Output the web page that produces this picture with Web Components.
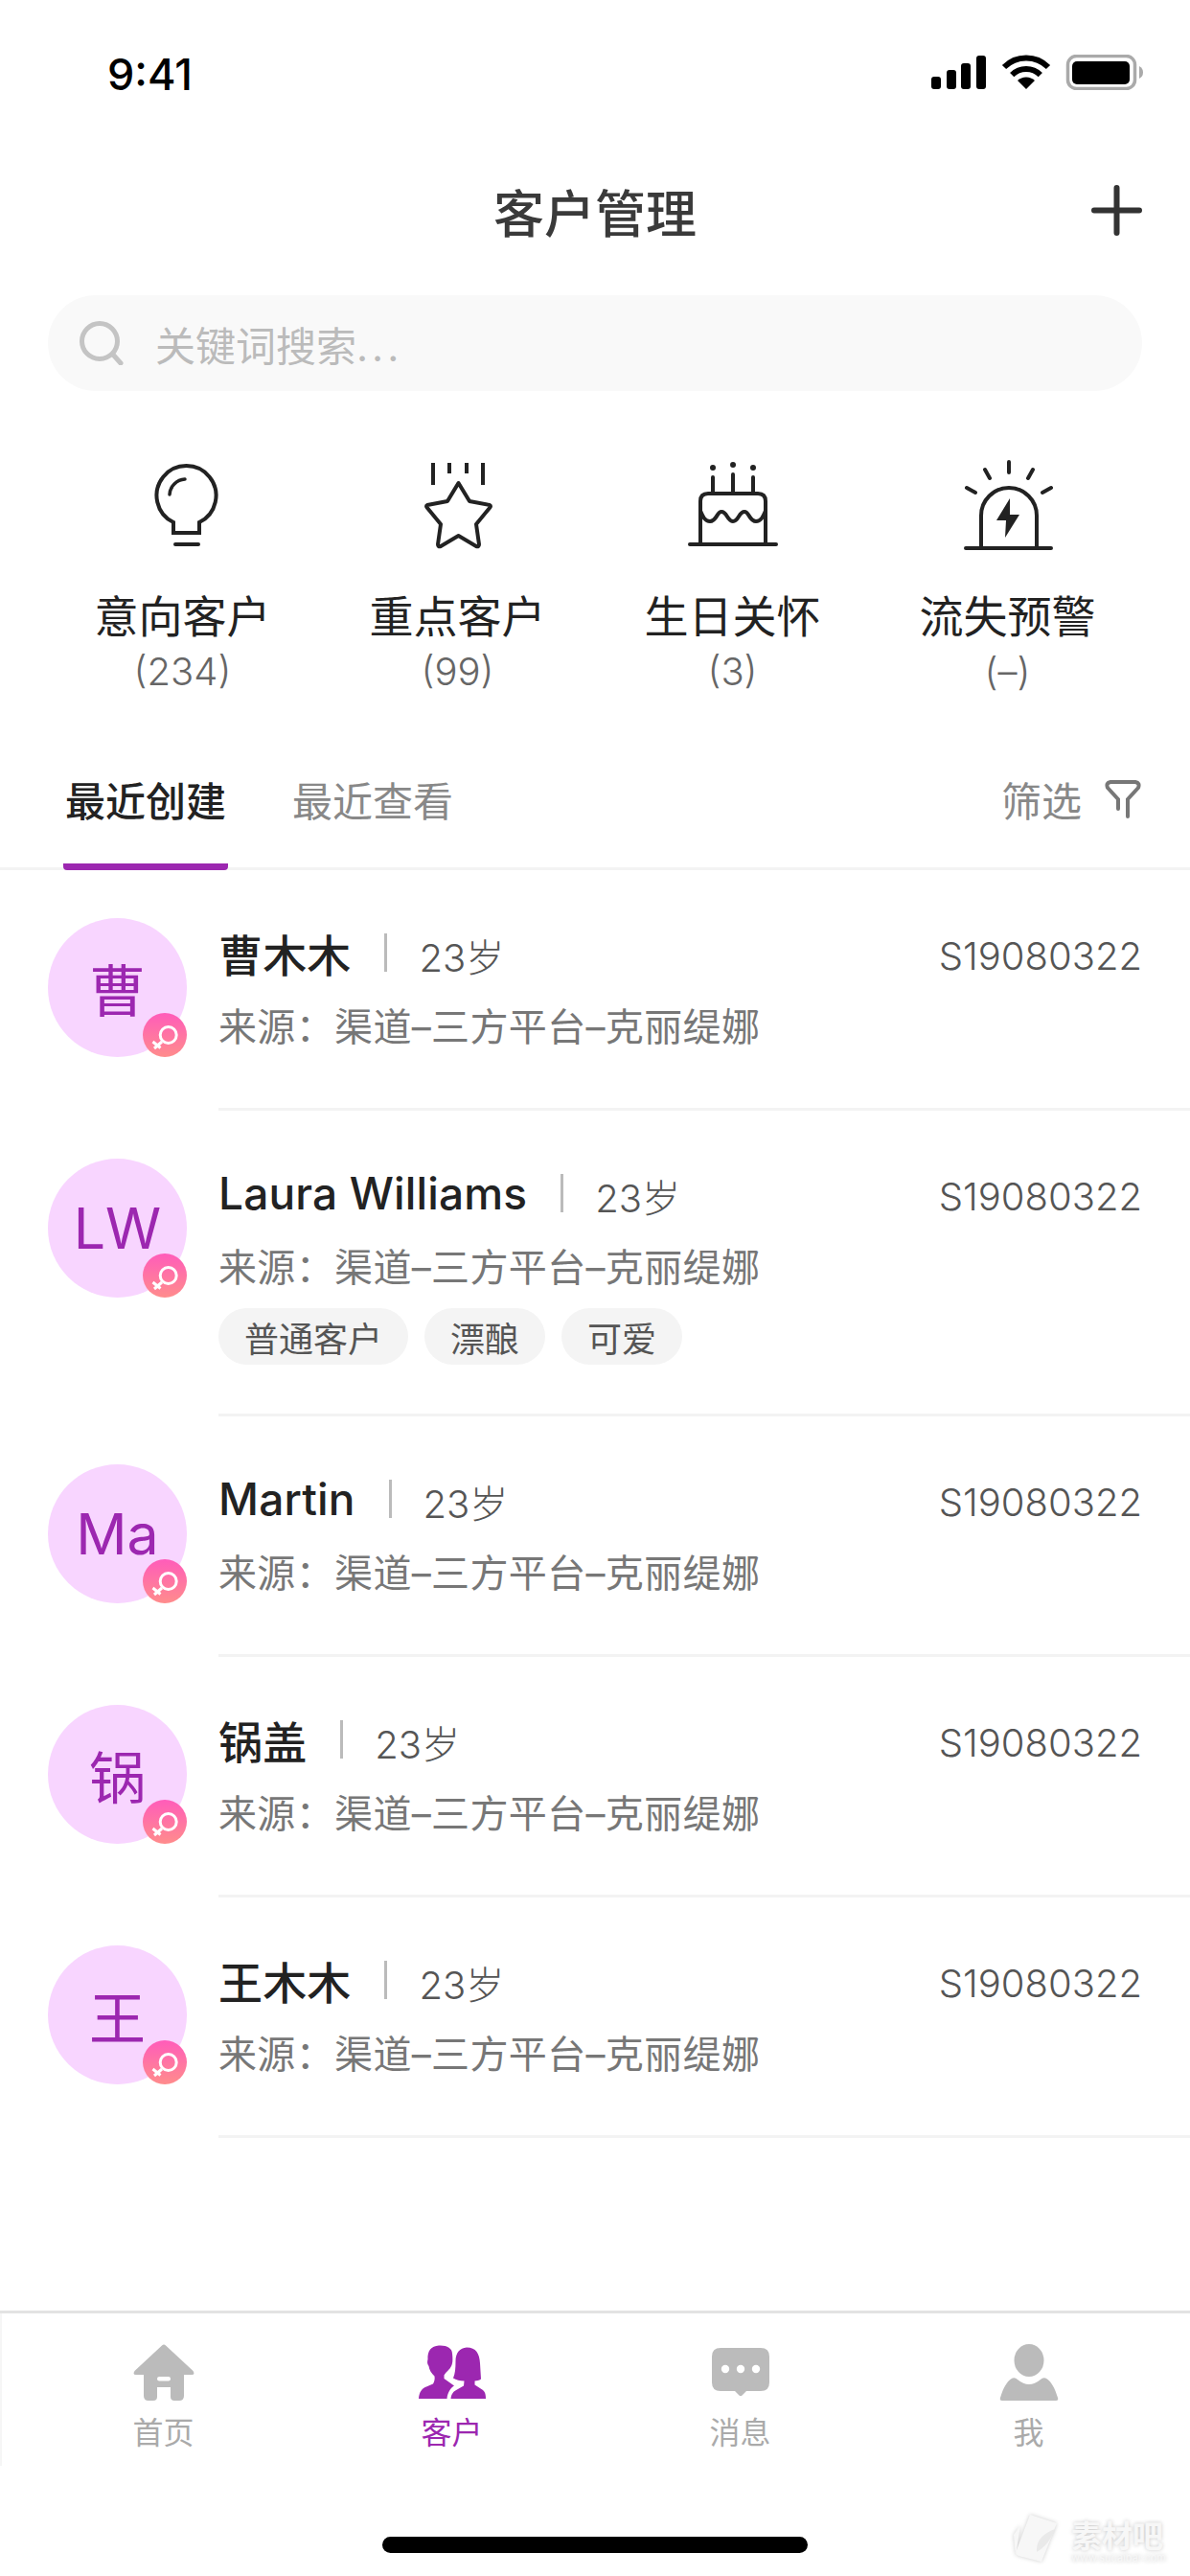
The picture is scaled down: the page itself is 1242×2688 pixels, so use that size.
<!DOCTYPE html>
<html lang="zh">
<head>
<meta charset="utf-8">
<title>客户管理</title>
<style>
html, body { margin: 0; padding: 0; background: #fff; }
body {
  width: 1242px;
  height: 2688px;
  display: flex;
  flex-direction: column;
  overflow: hidden;
  font-family: Inter, "Noto Sans CJK SC", sans-serif;
  color: #222;
}
.spacer { flex: 1; }
.dots { letter-spacing: 4px; }
</style>
</head>
<body>
  <cus-status-bar></cus-status-bar>
  <cus-nav>客户管理</cus-nav>
  <cus-search>关键词搜索<span class="dots">...</span></cus-search>

  <cus-quick>
    <cus-quick-item label="意向客户" count="(234)">
      <svg viewBox="0 0 96 96" fill="none" stroke="#222" stroke-width="4" stroke-linecap="round">
        <path d="M38 67V78H65V67A31 31 0 1 0 38 67Z" stroke-linecap="butt"/>
        <path d="M34 38A17 17 0 0 1 50 22" stroke-width="3.5"/>
        <path d="M40 90H64"/>
      </svg>
    </cus-quick-item>
    <cus-quick-item label="重点客户" count="(99)">
      <svg viewBox="0 0 96 96" fill="none" stroke="#222" stroke-width="4" stroke-linejoin="round">
        <path d="M48.500 26L60 45L81 49Q83 50 81 52L67 69L70 90Q70 93 67 92L48.500 81L30 92Q27 93 27 90L30 69L16 52Q14 50 16 49L37 45Z"/>
        <path d="M22 5V28M39 5V16M57 5V16M74 5V28"/>
      </svg>
    </cus-quick-item>
    <cus-quick-item label="生日关怀" count="(3)">
      <svg viewBox="0 0 96 96" fill="none" stroke="#222" stroke-width="4" stroke-linecap="round">
        <circle cx="27" cy="10" r="3" fill="#222" stroke="none"/>
        <circle cx="48" cy="7" r="3" fill="#222" stroke="none"/>
        <circle cx="69" cy="10" r="3" fill="#222" stroke="none"/>
        <path d="M27 20V36M48 17V36M69 20V36"/>
        <path d="M14 90V45Q14 37 22 37H74Q82 37 82 45V90"/>
        <path d="M3 90H93"/>
        <path d="M14 55C17 62 19 66 24 66C31 66 31 56 36 56C42 56 42 66 48 66C54 66 54 56 60 56C65 56 65 66 72 66C77 66 79 62 82 55"/>
      </svg>
    </cus-quick-item>
    <cus-quick-item label="流失预警" count="(–)">
      <svg viewBox="0 0 96 96" fill="none" stroke="#222" stroke-width="4" stroke-linecap="round">
        <path d="M4 94H93"/>
        <path d="M20 94V60A29 29 0 0 1 78 60V94"/>
        <path d="M49 4V15M24 12L29 21M74 12L69 21M5 31L14 36M93 31L84 36"/>
        <polygon points="50,42 36,65 46,65 45,83 60,59 50,59" fill="#222" stroke="none"/>
      </svg>
    </cus-quick-item>
  </cus-quick>

  <cus-tabs></cus-tabs>

  <cus-row initial="曹" name="曹木木"></cus-row>
  <cus-row initial="LW" name="Laura Williams">
    <cus-tag>普通客户</cus-tag><cus-tag>漂酿</cus-tag><cus-tag>可爱</cus-tag>
  </cus-row>
  <cus-row initial="Ma" name="Martin"></cus-row>
  <cus-row initial="锅" name="锅盖"></cus-row>
  <cus-row initial="王" name="王木木"></cus-row>

  <div class="spacer"></div>

  <cus-tabbar>
    <cus-tabbar-item label="首页">
      <svg viewBox="0 0 70 60" fill="#bbb">
        <path d="M33 1.500Q35 -0.500 37 1.500L65.500 28Q68 32 64 32H56V54Q56 59 51 59H46Q42 59 42 55V45H28V55Q28 59 24 59H19Q14 59 14 54V32H6Q2 32 4.500 28Z"/>
        <rect x="28" y="34" width="14" height="4.500" rx="2.200" fill="#fff"/>
      </svg>
    </cus-tabbar-item>
    <cus-tabbar-item label="客户" active>
      <svg viewBox="0 0 70 60" fill="#9c27b0">
        <path d="M21 1.500C29 1 35 4 35 10C35.500 14 35.500 18 35 20C34 26 29 28 26.500 32.500L26.500 36L37 43.500C33 46 30 51 29.500 57H0C0.500 50 3 46.500 8 44.500L15 41.500C16.500 39 17 36 16.500 33.500C13 30 11 27 10.500 23C8.500 20 9 18 9.500 16C9 7 13 2 21 1.500Z"/>
        <path d="M50 3.500C60 3.500 63.500 10 64 20L65 36.500C63 38 60.500 38 58.500 38.500L58.500 42.500L67 48C69.500 50 70 53 70 57H33.500C34 52 36.500 49 40 47.500L47 43.500L47.500 38.500C43 38.500 39 37.500 36 35.500C38 31 38.500 25 38.500 18C38.500 9 43 4 50 3.500Z"/>
      </svg>
    </cus-tabbar-item>
    <cus-tabbar-item label="消息">
      <svg viewBox="0 0 70 60" fill="#bbb">
        <path d="M14 4H56Q65 4 65 13V40Q65 49 56 49H41L36.500 53.500Q35 55 33.500 53.500L29 49H14Q5 49 5 40V13Q5 4 14 4Z"/>
        <circle cx="19" cy="26" r="4.200" fill="#fff"/>
        <circle cx="35" cy="26" r="4.200" fill="#fff"/>
        <circle cx="51" cy="26" r="4.200" fill="#fff"/>
      </svg>
    </cus-tabbar-item>
    <cus-tabbar-item label="我">
      <svg viewBox="0 0 70 60" fill="#bbb">
        <ellipse cx="35" cy="17" rx="15.500" ry="17"/>
        <path d="M7 59Q4 59 5 56C8 46 12 39 16 36.500Q20 34 23 37Q35 47 47 37Q50 34 54 36.500C58 39 62 46 65 56Q66 59 63 59Z"/>
      </svg>
    </cus-tabbar-item>
  </cus-tabbar>

<script>
// status bar
const templateStatusBar = document.createElement("template");
templateStatusBar.innerHTML = `
<style>
:host { display: flex; height: 166px; box-sizing: border-box; padding: 57px 49px 0 112px; justify-content: space-between; align-items: flex-start; }
.time { font-size: 45px; line-height: 42px; font-weight: 500; color: #000; }
svg { width: 221px; height: 37px; display: block; }
</style>
<span class="time">9:41</span>
<svg viewBox="0 0 221 37">
  <rect x="0" y="23" width="10" height="13" rx="3"/>
  <rect x="16" y="16" width="10" height="20" rx="3"/>
  <rect x="31" y="9" width="10" height="27" rx="3"/>
  <rect x="47" y="1" width="10" height="35" rx="3"/>
  <path d="M99 36L90 27A13 13 0 0 1 108 27Z"/>
  <path d="M84.200 21.200A21 21 0 0 1 113.800 21.200M76 13A32.500 32.500 0 0 1 122 13" fill="none" stroke="#000" stroke-width="6"/>
  <rect x="142.500" y="1.500" width="70" height="34" rx="9" fill="none" stroke="#aaa" stroke-width="3.500"/>
  <rect x="147" y="7" width="60" height="24" rx="5"/>
  <path d="M217 12Q221 14 221 18.500Q221 23 217 25Z" fill="#aaa"/>
</svg>
`;
class CusStatusBar extends HTMLElement {
  constructor() {
    super();
    this.attachShadow({ mode: "open" });
    this.shadowRoot.appendChild(templateStatusBar.content.cloneNode(true));
  }
}
customElements.define("cus-status-bar", CusStatusBar);

// title row
const templateNav = document.createElement("template");
templateNav.innerHTML = `
<style>
:host { display: grid; grid-template-columns: 1fr auto 1fr; align-items: center; height: 112px; padding: 0 50px; }
.title { grid-column: 2; margin-top: -4px; font-size: 53px; font-weight: 500; color: #3a3a3a; }
svg { justify-self: end; width: 53px; height: 53px; margin-top: -6px; }
</style>
<div class="title"><slot></slot></div>
<svg viewBox="0 0 53 53" stroke="#333" stroke-linecap="round" stroke-width="6"><path d="M26.500 3V50M3 26.500H50"/></svg>
`;
class CusNav extends HTMLElement {
  constructor() {
    super();
    this.attachShadow({ mode: "open" });
    this.shadowRoot.appendChild(templateNav.content.cloneNode(true));
  }
}
customElements.define("cus-nav", CusNav);

// search box
const templateSearch = document.createElement("template");
templateSearch.innerHTML = `
<style>
:host { display: flex; align-items: center; gap: 33px; height: 100px; margin: 30px 50px 0; padding: 0 33px; border-radius: 50px; background: #f9f9f9; font-size: 42px; color: #bbb; }
svg { width: 46px; height: 46px; flex: none; }
</style>
<svg viewBox="0 0 46 46" fill="none" stroke="#c4c4c4" stroke-width="5" stroke-linecap="round"><circle cx="21" cy="21" r="18.500"/><path d="M35 35L43 44"/></svg>
<span><slot></slot></span>
`;
class CusSearch extends HTMLElement {
  constructor() {
    super();
    this.attachShadow({ mode: "open" });
    this.shadowRoot.appendChild(templateSearch.content.cloneNode(true));
  }
}
customElements.define("cus-search", CusSearch);

// four shortcuts
const templateQuick = document.createElement("template");
templateQuick.innerHTML = `
<style>
:host { display: grid; grid-template-columns: repeat(4, 287px); margin-top: 70px; padding-left: 47px; }
</style>
<slot></slot>
`;
class CusQuick extends HTMLElement {
  constructor() {
    super();
    this.attachShadow({ mode: "open" });
    this.shadowRoot.appendChild(templateQuick.content.cloneNode(true));
  }
}
customElements.define("cus-quick", CusQuick);

const templateQuickItem = document.createElement("template");
templateQuickItem.innerHTML = `
<style>
:host { display: flex; flex-direction: column; align-items: center; }
::slotted(svg) { width: 96px; height: 96px; display: block; }
.label { margin-top: 40px; font-size: 46px; line-height: 58px; color: #222; }
.count { margin-top: 6px; margin-bottom: -1px; font-size: 40px; line-height: 46px; font-weight: 300; color: #666; }
</style>
<slot></slot>
<div class="label"></div>
<div class="count"></div>
`;
class CusQuickItem extends HTMLElement {
  constructor() {
    super();
    this.attachShadow({ mode: "open" });
    this.shadowRoot.appendChild(templateQuickItem.content.cloneNode(true));
  }
  connectedCallback() {
    this.shadowRoot.querySelector(".label").textContent = this.getAttribute("label");
    this.shadowRoot.querySelector(".count").textContent = this.getAttribute("count");
  }
}
customElements.define("cus-quick-item", CusQuickItem);

// recent tabs + filter
const templateTabs = document.createElement("template");
templateTabs.innerHTML = `
<style>
:host { display: flex; align-items: stretch; gap: 65px; height: 140px; margin-top: 45px; padding: 0 51px 0 66px; border-bottom: 3px solid #f3f3f3; box-sizing: border-box; font-size: 42px; color: #888; }
.tab { display: flex; align-items: center; padding: 0 2px 6px; }
.on { margin-bottom: -3px; border-bottom: 7px solid #9c27b0; border-radius: 0 0 4px 4px; font-weight: 500; color: #222; padding-bottom: 2px; }
.filter { margin-left: auto; display: flex; align-items: center; gap: 24px; padding-bottom: 6px; }
svg { width: 38px; height: 40px; }
</style>
<div class="tab on">最近创建</div>
<div class="tab">最近查看</div>
<div class="filter">筛选
  <svg viewBox="0 0 38 40" fill="none" stroke="#777" stroke-width="4" stroke-linecap="round"><path d="M14 30V20L3 8Q1 3 6 2H32Q37 3 35 8L24 20V38"/></svg>
</div>
`;
class CusTabs extends HTMLElement {
  constructor() {
    super();
    this.attachShadow({ mode: "open" });
    this.shadowRoot.appendChild(templateTabs.content.cloneNode(true));
  }
}
customElements.define("cus-tabs", CusTabs);

// customer row
const templateRow = document.createElement("template");
templateRow.innerHTML = `
<style>
:host { display: flex; align-items: stretch; padding-left: 50px; }
.avatar { position: relative; flex: none; display: flex; align-items: center; justify-content: center; width: 145px; height: 145px; margin-top: 50px; border-radius: 50%; background: #f8d5ff; font-size: 59px; color: #9c27b0; }
.badge { position: absolute; right: 0; bottom: 0; width: 46px; height: 46px; border-radius: 50%; background: linear-gradient(180deg, #ff5cba, #ff8c8c); }
.badge svg { display: block; width: 46px; height: 46px; }
.main { flex: 1; min-width: 0; margin-left: 33px; padding: 56px 50px 59px 0; border-bottom: 3px solid #f3f3f3; }
.head { display: flex; align-items: center; height: 60px; }
.name { font-size: 46px; font-weight: 500; letter-spacing: .15px; color: #222; }
.sep { width: 3px; height: 40px; margin: 0 33px 0 35px; background: #bbb; }
.age { padding-top: 6px; font-size: 40px; font-weight: 300; color: #555; }
.no { margin-left: auto; padding-top: 6px; font-size: 40px; font-weight: 300; color: #555; }
.source { margin-top: 23px; font-size: 40px; line-height: 50px; letter-spacing: .35px; color: #777; }
.tags { display: flex; gap: 17px; }
.tags.has { margin-top: 17px; margin-bottom: -8px; }
</style>
<div class="avatar">
  <span class="initial"></span>
  <div class="badge">
    <svg viewBox="0 0 46 46" fill="none" stroke="#fff" stroke-width="3"><circle cx="26.700" cy="23" r="8.500"/><path d="M20 30L12 37M10.500 30L18.500 36.500"/></svg>
  </div>
</div>
<div class="main">
  <div class="head">
    <span class="name"></span><span class="sep"></span><span class="age">23岁</span>
    <span class="no">S19080322</span>
  </div>
  <div class="source">来源：渠道–三方平台–克丽缇娜</div>
  <div class="tags"><slot></slot></div>
</div>
`;
class CusRow extends HTMLElement {
  constructor() {
    super();
    this.attachShadow({ mode: "open" });
    this.shadowRoot.appendChild(templateRow.content.cloneNode(true));
  }
  connectedCallback() {
    this.shadowRoot.querySelector(".initial").textContent = this.getAttribute("initial");
    this.shadowRoot.querySelector(".name").textContent = this.getAttribute("name");
    if (this.children.length) this.shadowRoot.querySelector(".tags").classList.add("has");
  }
}
customElements.define("cus-row", CusRow);

const templateTag = document.createElement("template");
templateTag.innerHTML = `
<style>
:host { display: flex; align-items: center; height: 59px; padding: 0 27px; border-radius: 30px; background: #f4f4f4; font-size: 36px; color: #555; }
</style>
<slot></slot>
`;
class CusTag extends HTMLElement {
  constructor() {
    super();
    this.attachShadow({ mode: "open" });
    this.shadowRoot.appendChild(templateTag.content.cloneNode(true));
  }
}
customElements.define("cus-tag", CusTag);

// bottom bar
const templateTabbar = document.createElement("template");
templateTabbar.innerHTML = `
<style>
:host { display: block; position: relative; height: 277px; box-sizing: border-box; border-top: 3px solid #e3e3e3; }
.items { display: grid; grid-template-columns: repeat(4, 301px); height: 159px; box-sizing: border-box; padding: 32px 0 0 18px; border-left: 2px solid #f6f6f6; }
.home { width: 444px; height: 17px; margin: 74px auto 0; border-radius: 9px; background: #000; }
.mark { position: absolute; right: 25px; top: 218px; display: flex; align-items: center; gap: 15px; color: #f7f7f7; text-shadow: 0 0 4px rgba(0,0,0,.22); }
.mark svg { width: 46px; height: 50px; margin-top: -12px; filter: drop-shadow(0 0 2px rgba(0,0,0,.2)); }
.mark b { display: block; font-size: 32px; line-height: 30px; font-weight: 700; }
.mark small { display: block; font-size: 11px; line-height: 14px; }
</style>
<div class="items"><slot></slot></div>
<div class="home"></div>
<div class="mark">
  <svg viewBox="0 0 46 50" fill="#f7f7f7"><path d="M18 1L46 10L30 50L6 44Q2 42 4 38Z"/><path d="M1 22L8 12L3 44Z"/><path d="M44 16C34 20 24 26 25 40C32 36 40 28 44 16Z" fill="#e9e9e9"/></svg>
  <div><b>素材吧</b><small>www.sucaibar.com</small></div>
</div>
`;
class CusTabbar extends HTMLElement {
  constructor() {
    super();
    this.attachShadow({ mode: "open" });
    this.shadowRoot.appendChild(templateTabbar.content.cloneNode(true));
  }
}
customElements.define("cus-tabbar", CusTabbar);

const templateTabbarItem = document.createElement("template");
templateTabbarItem.innerHTML = `
<style>
:host { display: flex; flex-direction: column; align-items: center; font-size: 32px; color: #aaa; }
:host([active]) { color: #9c27b0; }
::slotted(svg) { width: 70px; height: 60px; display: block; }
.label { margin-top: 13px; line-height: 40px; }
</style>
<slot></slot>
<div class="label"></div>
`;
class CusTabbarItem extends HTMLElement {
  constructor() {
    super();
    this.attachShadow({ mode: "open" });
    this.shadowRoot.appendChild(templateTabbarItem.content.cloneNode(true));
  }
  connectedCallback() {
    this.shadowRoot.querySelector(".label").textContent = this.getAttribute("label");
  }
}
customElements.define("cus-tabbar-item", CusTabbarItem);
</script>
</body>
</html>
